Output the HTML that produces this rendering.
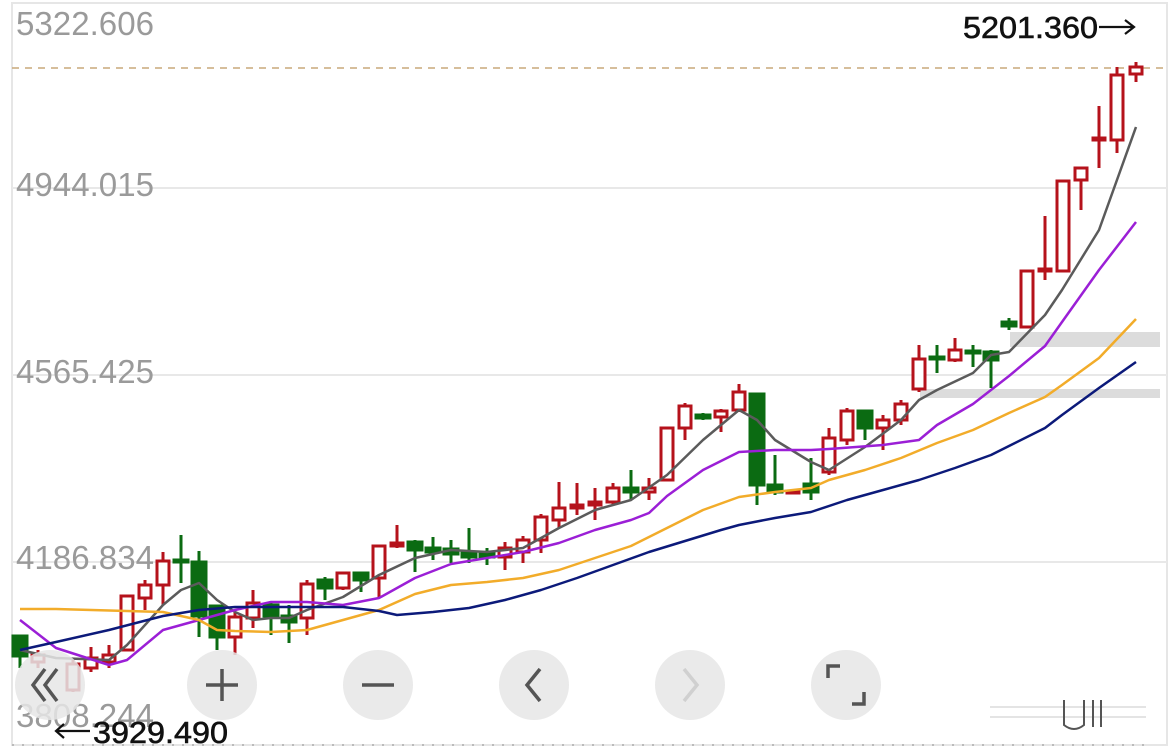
<!DOCTYPE html><html><head><meta charset="utf-8"><style>
html,body{margin:0;padding:0;background:#fff;width:1170px;height:751px;overflow:hidden}
svg{position:absolute;left:0;top:0}
.l{font-family:"Liberation Sans",sans-serif;font-size:33px;fill:#9a9a9a}
.b{font-family:"Liberation Sans",sans-serif;font-size:31px;fill:#111;stroke:#111;stroke-width:0.6}
</style></head><body>
<svg width="1170" height="751" viewBox="0 0 1170 751">
<rect x="12" y="3" width="1155" height="742" fill="none" stroke="#e6e6e6" stroke-width="2"/>
<g stroke="#e8e8e8" stroke-width="2"><line x1="12" y1="188" x2="1167" y2="188"/><line x1="12" y1="375" x2="1167" y2="375"/><line x1="12" y1="562" x2="1167" y2="562"/></g>
<line x1="12" y1="68" x2="1167" y2="68" stroke="#c9a87a" stroke-width="1.5" stroke-dasharray="7,6"/>
<rect x="1010" y="332" width="150" height="15" fill="#dcdcdc"/>
<rect x="920" y="389" width="240" height="9" fill="#dcdcdc"/>
<line x1="12" y1="745" x2="1150" y2="745" stroke="#bbb" stroke-width="2" stroke-dasharray="2,8"/>
<text class="l" x="16" y="35" textLength="138" lengthAdjust="spacingAndGlyphs">5322.606</text>
<text class="l" x="16" y="196" textLength="138" lengthAdjust="spacingAndGlyphs">4944.015</text>
<text class="l" x="16" y="383" textLength="138" lengthAdjust="spacingAndGlyphs">4565.425</text>
<text class="l" x="16" y="569" textLength="138" lengthAdjust="spacingAndGlyphs">4186.834</text>
<text class="b" x="963" y="38" textLength="135" lengthAdjust="spacingAndGlyphs">5201.360</text>
<path d="M1099 27H1133 M1125 20L1134 27L1125 34" fill="none" stroke="#111" stroke-width="2.2"/>
<!-- green candles -->
<g fill="#0b6b12" stroke="#0b6b12" stroke-width="3">
<path d="M20 636V668 M181 535V583 M199 551V637 M217 605V650 M271 602V635 M289 605V643 M325 577V600 M361 573V592 M415 540V572 M433 537V560 M451 540V563 M469 528V563 M487 548V565 M631 470V500 M703 413V420 M757 394V505 M775 455V495 M811 458V500 M865 411V440 M937 345V373 M973 345V367 M991 350V388 M1009 318V330"/>
<rect x="13" y="636" width="14" height="20"/>
<rect x="174" y="560" width="14" height="2"/>
<rect x="192" y="562" width="14" height="54"/>
<rect x="210" y="606" width="14" height="31"/>
<rect x="264" y="605" width="14" height="11"/>
<rect x="282" y="616" width="14" height="6"/>
<rect x="318" y="580" width="14" height="8"/>
<rect x="354" y="573" width="14" height="7"/>
<rect x="408" y="542" width="14" height="8"/>
<rect x="426" y="548" width="14" height="4"/>
<rect x="444" y="549" width="14" height="5"/>
<rect x="462" y="553" width="14" height="4"/>
<rect x="480" y="553" width="14" height="4"/>
<rect x="624" y="488" width="14" height="4"/>
<rect x="696" y="415" width="14" height="3"/>
<rect x="750" y="394" width="14" height="91"/>
<rect x="768" y="485" width="14" height="7"/>
<rect x="804" y="484" width="14" height="8"/>
<rect x="858" y="411" width="14" height="17"/>
<rect x="930" y="357" width="14" height="2"/>
<rect x="966" y="351" width="14" height="2"/>
<rect x="984" y="352" width="14" height="8"/>
<rect x="1002" y="322" width="14" height="4"/>
</g>
<!-- red candles -->
<g fill="#fff" stroke="#b5121b" stroke-width="3">
<path d="M38 650V668 M73 660V692 M91 647V672 M109 645V668 M127 596V650 M145 580V610 M163 552V605 M235 612V655 M253 590V628 M307 580V635 M343 573V590 M379 545V598 M397 525V548 M505 542V570 M523 536V563 M541 514V553 M559 482V528 M577 483V515 M595 488V520 M613 483V505 M649 478V500 M667 428V480 M685 403V440 M721 409V432 M739 384V412 M793 491V494 M829 428V475 M847 408V445 M883 415V450 M901 400V425 M919 345V392 M955 338V362 M1027 271V327 M1045 216V280 M1063 181V271 M1081 168V210 M1099 106V168 M1117 67V153 M1136 62V82"/>
<rect x="32" y="655" width="12" height="7"/>
<rect x="67" y="664" width="12" height="26"/>
<rect x="85" y="658" width="12" height="10"/>
<rect x="103" y="655" width="12" height="7"/>
<rect x="121" y="596" width="12" height="54"/>
<rect x="139" y="585" width="12" height="13"/>
<rect x="157" y="561" width="12" height="24"/>
<rect x="229" y="617" width="12" height="20"/>
<rect x="247" y="603" width="12" height="15"/>
<rect x="301" y="584" width="12" height="34"/>
<rect x="337" y="573" width="12" height="15"/>
<rect x="373" y="546" width="12" height="32"/>
<rect x="391" y="543" width="12" height="3"/>
<rect x="499" y="548" width="12" height="9"/>
<rect x="517" y="540" width="12" height="12"/>
<rect x="535" y="517" width="12" height="23"/>
<rect x="553" y="508" width="12" height="12"/>
<rect x="571" y="505" width="12" height="3"/>
<rect x="589" y="502" width="12" height="3"/>
<rect x="607" y="488" width="12" height="14"/>
<rect x="643" y="488" width="12" height="4"/>
<rect x="661" y="428" width="12" height="52"/>
<rect x="679" y="406" width="12" height="22"/>
<rect x="715" y="411" width="12" height="6"/>
<rect x="733" y="392" width="12" height="18"/>
<rect x="787" y="491" width="12" height="2"/>
<rect x="823" y="438" width="12" height="34"/>
<rect x="841" y="411" width="12" height="29"/>
<rect x="877" y="420" width="12" height="8"/>
<rect x="895" y="404" width="12" height="16"/>
<rect x="913" y="359" width="12" height="30"/>
<rect x="949" y="350" width="12" height="10"/>
<rect x="1021" y="271" width="12" height="56"/>
<rect x="1039" y="269" width="12" height="2"/>
<rect x="1057" y="181" width="12" height="90"/>
<rect x="1075" y="168" width="12" height="12"/>
<rect x="1093" y="138" width="12" height="2"/>
<rect x="1111" y="75" width="12" height="65"/>
<rect x="1130" y="67" width="12" height="7"/>
</g>
<g fill="none" stroke-width="2.5" stroke-linejoin="round">
<polyline stroke="#5b5b5b" points="20,650 56,658 109,660 127,645 163,605 181,590 199,583 217,600 235,612 253,620 271,618 289,618 307,610 343,597 379,575 415,558 451,550 487,552 523,548 559,528 595,510 631,500 667,475 703,440 739,410 757,420 775,440 811,462 829,470 865,447 901,420 919,400 937,390 973,373 991,355 1009,352 1045,315 1062,290 1099,230 1136,127"/>
<polyline stroke="#9b1fd6" points="20,620 56,648 109,665 127,660 163,630 199,620 235,610 271,602 307,602 343,605 379,598 415,578 451,564 487,558 523,552 559,543 595,530 631,520 649,513 667,496 703,470 739,452 775,450 811,450 829,449 883,445 919,440 937,425 973,404 1009,376 1045,346 1062,322 1099,270 1136,222"/>
<polyline stroke="#f2ac2a" points="20,609 56,609 127,611 163,612 199,620 217,630 235,631 271,632 307,630 343,620 379,610 415,594 451,585 487,582 523,578 559,570 595,558 631,546 667,528 703,510 739,497 775,492 811,488 829,480 865,470 901,458 937,443 973,430 1009,413 1045,397 1062,385 1099,358 1136,319"/>
<polyline stroke="#0c1a7a" points="20,650 56,642 109,630 163,616 199,610 235,607 271,607 307,607 343,607 379,611 397,615 433,612 469,608 505,600 541,590 577,578 613,565 649,552 685,541 721,530 739,525 775,518 811,512 847,500 883,490 919,480 955,468 991,455 1009,446 1045,428 1062,415 1099,388 1136,362"/>
</g>
<text class="l" x="16" y="727" textLength="138" lengthAdjust="spacingAndGlyphs">3808.244</text>
<g fill="#e6e6e6" fill-opacity="0.85">
<circle cx="50" cy="685" r="35"/><circle cx="222" cy="685" r="35"/><circle cx="378" cy="685" r="35"/><circle cx="534" cy="685" r="35"/><circle cx="690" cy="685" r="35"/><circle cx="846" cy="685" r="35"/>
</g>
<g fill="none" stroke="#555" stroke-width="3.5">
<path d="M45 669L33 685L45 701 M57 669L45 685L57 701"/>
<path d="M206 685H238 M222 669V701"/>
<path d="M362 685H394"/>
<path d="M540 669L527 685L540 701"/>
<path d="M684 669L697 685L684 701" stroke="#d0d0d0"/>
<path d="M828 678V666H840 M852 704H864V692"/>
</g>
<path d="M57 731H90 M64 724L56 731L64 738" fill="none" stroke="#111" stroke-width="2.2"/>
<text class="b" x="93" y="743" textLength="135" lengthAdjust="spacingAndGlyphs">3929.490</text>
<g stroke="#e4e4e4" stroke-width="2"><line x1="990" y1="707" x2="1146" y2="707"/><line x1="990" y1="717" x2="1146" y2="717"/></g>
<path d="M1064 700V725Q1074 733 1084 725V700 M1093 700V727 M1101 700V727" fill="none" stroke="#555" stroke-width="2"/>
</svg>
</body></html>
